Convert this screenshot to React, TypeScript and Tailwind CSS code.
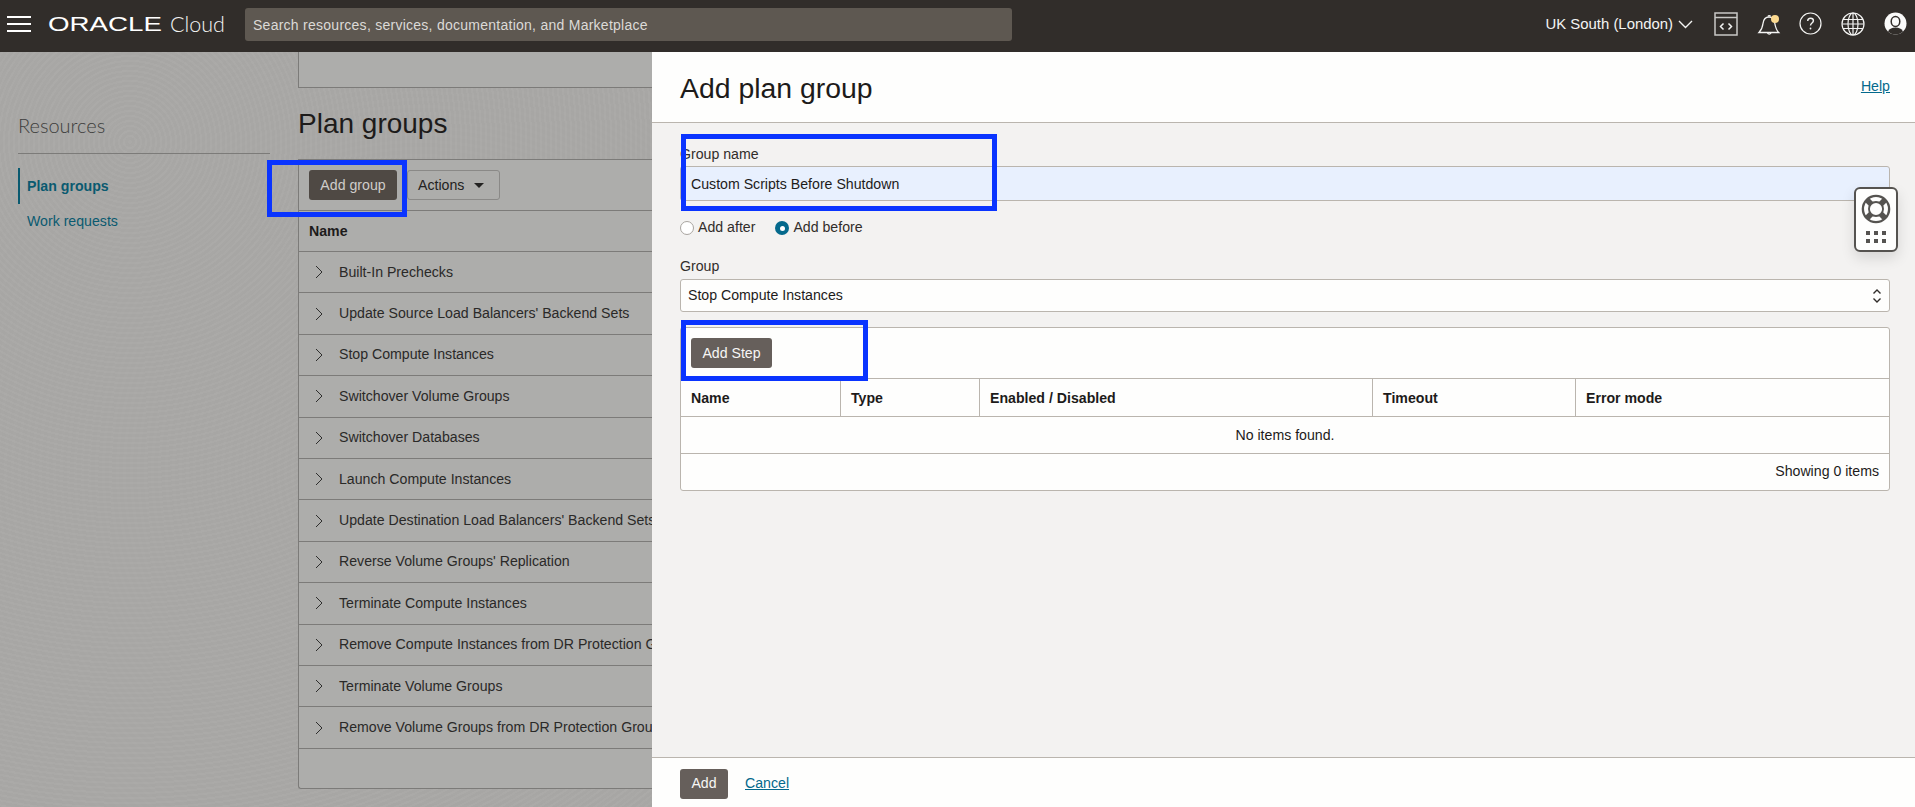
const SANS = "font-['Liberation_Sans',Arial,sans-serif]";

const PLAN_GROUPS = [
  "Built-In Prechecks",
  "Update Source Load Balancers' Backend Sets",
  "Stop Compute Instances",
  "Switchover Volume Groups",
  "Switchover Databases",
  "Launch Compute Instances",
  "Update Destination Load Balancers' Backend Sets",
  "Reverse Volume Groups' Replication",
  "Terminate Compute Instances",
  "Remove Compute Instances from DR Protection Group",
  "Terminate Volume Groups",
  "Remove Volume Groups from DR Protection Group",
];

const STEP_COLUMNS = [
  { label: "Name", width: "w-[160px]" },
  { label: "Type", width: "w-[139px]" },
  { label: "Enabled / Disabled", width: "w-[393px]" },
  { label: "Timeout", width: "w-[203px]" },
  { label: "Error mode", width: "flex-1" },
];

function TopBarIcons() {
  return (
    <div className="flex items-center gap-[19px]">
      <svg width="24" height="24" viewBox="0 0 24 24" fill="none" stroke="#c9c8c6" strokeWidth="1.5">
        <rect x="1" y="1" width="22" height="22" />
        <path d="M1 5.500h22" />
        <path d="M9.500 11.500 6.500 14.500l3 3M14.500 11.500l3 3-3 3" stroke="#f4f4f3" />
      </svg>
      <svg width="24" height="24" viewBox="0 0 24 24" fill="none" stroke="#f4f4f3" strokeWidth="1.3" className="mr-[-1px]">
        <path d="M2 20.500c2-2 3.500-5 4-9 .5-4 2.500-6.500 6-6.500 3 0 5 2 5.700 6 .7 4 2 7.500 4 9.500z" />
        <path d="M10.500 21a2 2 0 0 0 3.500 0" />
        <path d="M11 4.500a1.300 1.300 0 0 1 2.500 0" />
        <circle cx="18" cy="7" r="4" fill="#fcd98f" stroke="none" />
      </svg>
      <svg width="23" height="23" viewBox="0 0 23 23" fill="none" stroke="#f4f4f3" strokeWidth="1.2">
        <circle cx="11.500" cy="11.500" r="10.500" />
        <path d="M8.700 9c0-1.700 1.200-2.800 2.900-2.800s2.800 1 2.800 2.500c0 2.300-2.900 2.300-2.900 4.800" strokeWidth="1.400" />
        <circle cx="11.500" cy="16.500" r="0.900" fill="#f4f4f3" stroke="none" />
      </svg>
      <svg width="24" height="24" viewBox="0 0 24 24" fill="none" stroke="#f4f4f3" strokeWidth="1.2">
        <circle cx="12" cy="12" r="11" />
        <ellipse cx="12" cy="12" rx="5" ry="11" />
        <path d="M12 1v22M2 7.500h20M1 12h22M2 16.500h20" />
      </svg>
      <svg width="23" height="23" viewBox="0 0 23 23">
        <circle cx="11.500" cy="11.500" r="11" fill="#fbfbfa" />
        <ellipse cx="11.500" cy="9.500" rx="4.300" ry="5" fill="none" stroke="#312d2a" strokeWidth="1.500" />
        <path d="M4 19.500c1.500-3 4-4 7.500-4s6 1 7.500 4c-2 2-4.500 3-7.500 3s-5.500-1-7.500-3z" fill="#312d2a" />
      </svg>
    </div>
  );
}

function TopBar() {
  return (
    <header className="flex h-[52px] shrink-0 items-center bg-[#312d2a] pb-[3px]">
      <div className="mb-[1px] ml-[7px] flex w-[24px] flex-col gap-[5px]">
        <span className="h-[2px] bg-white" />
        <span className="h-[2px] bg-white" />
        <span className="h-[2px] bg-white" />
      </div>
      <div className="ml-[17px] w-[122px] overflow-visible">
        <span className={`${SANS} inline-block origin-left scale-x-[1.32] text-[21px] leading-none text-white`}>
          ORACLE
        </span>
      </div>
      <span className="w-[75px] font-['Lato',sans-serif] text-[21.500px] font-light leading-none text-[#f4f4f3]">Cloud</span>
      <input
        readOnly
        placeholder="Search resources, services, documentation, and Marketplace"
        className={`${SANS} h-[33px] w-[767px] rounded-[3px] bg-[#5e5851] px-[8px] text-[14px] tracking-[0.26px] outline-none placeholder:text-[#dcdad7]`}
      />
      <div className={`${SANS} ml-auto flex items-center text-[14.900px] text-[#f4f4f3]`}>
        UK South (London)
        <svg width="15" height="9" viewBox="0 0 15 9" fill="none" stroke="#f4f4f3" strokeWidth="1.400" className="ml-[5px]">
          <path d="M1 1l6.500 6.500L14 1" />
        </svg>
      </div>
      <div className="mb-[2px] ml-[21px] mr-[8px]">
        <TopBarIcons />
      </div>
    </header>
  );
}

function RowChevron() {
  return (
    <svg width="8" height="14" viewBox="0 0 8 14" fill="none" stroke="#2e2e2d" strokeWidth="1">
      <path d="M1 1l6 6-6 6" />
    </svg>
  );
}

function BackgroundPage() {
  return (
    <div className="flex w-[652px] shrink-0 overflow-hidden bg-[#a9a8a6] bg-[repeating-radial-gradient(circle_at_130px_90px,rgba(255,255,255,0.012)_0,rgba(255,255,255,0.012)_2px,rgba(0,0,0,0.012)_2px,rgba(0,0,0,0.012)_5px),repeating-radial-gradient(circle_at_420px_420px,rgba(255,255,255,0.01)_0,rgba(255,255,255,0.01)_3px,transparent_3px,transparent_7px)]">
      <aside className="w-[298px] shrink-0 pl-[18px] pr-[28px] pt-[60px]">
        <div className="border-b border-[#7c7b79] pb-[15px] font-['Lato',sans-serif] text-[20px] font-light leading-[26px] text-[#3d3d3c]">
          Resources
        </div>
        <nav className={`${SANS} mt-[14px] text-[14.150px] text-[#0a5a70]`}>
          <div className="flex h-[36px] items-center border-l-[2px] border-[#0a5a70] pl-[7px] pt-[2px] font-bold">Plan groups</div>
          <div className="mt-[8px] flex h-[20px] items-center pl-[9px]">Work requests</div>
        </nav>
      </aside>
      <main className={`${SANS} w-[900px] shrink-0`}>
        <div className="h-[36px] border-b border-l border-[#7c7b79] bg-[#adadab]" />
        <h2 className="mt-[17px] h-[54px] text-[28px] font-normal leading-[38px] text-[#1d1b1a]">Plan groups</h2>
        <section className="h-[630px] rounded-bl-[3px] border-b border-l border-t border-[#7c7b79] bg-[#adadab] text-[14.150px]">
          <div className="flex h-[51px] items-center gap-[10px] border-b border-[#7c7b79] pl-[10px]">
            <button className="flex h-[30px] w-[88px] items-center justify-center rounded-[3px] bg-[#4f4944] pt-[1px] text-[#cfcdca]">
              Add group
            </button>
            <button className="flex h-[30px] w-[93px] items-center gap-[10px] rounded-[3px] border border-[#8a8987] pl-[10px] pt-[1px] text-[#232221]">
              Actions
              <span className="border-x-[5px] border-t-[5px] border-x-transparent border-t-[#232221]" />
            </button>
          </div>
          <div className="flex h-[41px] items-center border-b border-[#7c7b79] pl-[10px] pt-[2px] font-bold text-[#1d1b1a]">Name</div>
          {PLAN_GROUPS.map((name) => (
            <div
              key={name}
              className="flex h-[41.420px] items-center gap-[16px] whitespace-nowrap border-b border-[#7c7b79] pl-[16px] text-[#2a2928]"
            >
              <RowChevron />
              {name}
            </div>
          ))}
        </section>
      </main>
    </div>
  );
}

function RadioOption({ label, checked }: { label: string; checked?: boolean }) {
  return (
    <div className="flex items-center gap-[4px]">
      {checked ? (
        <span className="flex size-[14px] items-center justify-center rounded-full bg-[#04698c]">
          <span className="size-[5px] rounded-full bg-white" />
        </span>
      ) : (
        <span className="size-[14px] rounded-full border border-[#a9a5a0] bg-white" />
      )}
      {label}
    </div>
  );
}

function AddPlanGroupPanel() {
  return (
    <div className={`${SANS} flex min-w-0 flex-1 flex-col bg-[#f3f2f1] text-[14.150px] text-[#1d1b1a]`}>
      <div className="flex h-[71px] shrink-0 items-center justify-between border-b border-[#bab5ae] bg-[#fefefd] pl-[28px] pr-[25px]">
        <h1 className="mt-[3px] text-[28.400px] font-normal leading-none">Add plan group</h1>
        <a className="text-[#04698c] underline">Help</a>
      </div>
      <div className="flex-1 pl-[28px] pr-[25px] pt-[21px]">
        <label className="block leading-[20px] text-[#312d2a]">Group name</label>
        <input
          readOnly
          value="Custom Scripts Before Shutdown"
          className="mt-[2px] h-[35px] w-full rounded-[3px] border border-[#bab5ae] bg-[#e8f0fe] px-[10px] outline-none"
        />
        <div className="mt-[17px] flex h-[20px] items-center gap-[20px] text-[#312d2a]">
          <RadioOption label="Add after" />
          <RadioOption label="Add before" checked />
        </div>
        <label className="mt-[18px] block leading-[20px] text-[#312d2a]">Group</label>
        <div className="mt-[3px] flex h-[33px] items-center justify-between rounded-[3px] border border-[#bab5ae] bg-[#fefefd] pl-[7px] pr-[7px] pt-[1px]">
          Stop Compute Instances
          <svg width="10" height="16" viewBox="0 0 10 16" fill="none" stroke="#312d2a" strokeWidth="1.4">
            <path d="M1.500 5.500 5 2l3.500 3.500M1.500 10.500 5 14l3.500-3.500" />
          </svg>
        </div>
        <section className="mt-[15px] h-[164px] rounded-[3px] border border-[#bab5ae] bg-[#fefefd]">
          <div className="flex h-[51px] items-center border-b border-[#bab5ae] pl-[10px]">
            <button className="flex h-[30px] w-[81px] items-center justify-center rounded-[3px] bg-[#665f5b] pt-[1px] text-[#f7f6f5]">
              Add Step
            </button>
          </div>
          <div className="flex h-[38px] border-b border-[#bab5ae] font-bold">
            {STEP_COLUMNS.map((col) => (
              <div key={col.label} className={`${col.width} flex items-center border-r border-[#bab5ae] pl-[10px] pt-[2px] last:border-r-0`}>
                {col.label}
              </div>
            ))}
          </div>
          <div className="flex h-[37px] items-center justify-center border-b border-[#bab5ae] pt-[1px]">No items found.</div>
          <div className="flex h-[36px] items-center justify-end pr-[10px]">Showing 0 items</div>
        </section>
      </div>
      <div className="flex h-[50px] shrink-0 items-center gap-[17px] border-t border-[#bab5ae] bg-[#fefefd] pl-[28px] pt-[2px]">
        <button className="flex h-[30px] w-[48px] items-center justify-center rounded-[3px] bg-[#665f5b] pt-[1px] text-[#f7f6f5]">Add</button>
        <a className="pt-[1px] text-[#04698c] underline">Cancel</a>
      </div>
    </div>
  );
}

function HelpWidget() {
  return (
    <div className="absolute left-[1854px] top-[187px] flex h-[65px] w-[44px] flex-col items-center rounded-[6px] border-2 border-[#555350] bg-[#fefefd] pt-[5px] shadow-[0_6px_14px_rgba(0,0,0,0.12)]">
      <svg width="30" height="30" viewBox="0 0 32 32" fill="none">
        <circle cx="16" cy="16" r="14" stroke="#555350" strokeWidth="2.500" fill="#fefefd" />
        <path d="M6.500 6.500l5 5M25.500 6.500l-5 5M6.500 25.500l5-5M25.500 25.500l-5-5" stroke="#555350" strokeWidth="6" />
        <circle cx="16" cy="16" r="7.500" stroke="#555350" strokeWidth="2" fill="#fefefd" />
      </svg>
      <div className="mt-[7px] grid grid-cols-3 gap-[4px]">
        {[0, 1, 2, 3, 4, 5].map((i) => (
          <span key={i} className="size-[4px] bg-[#555350]" />
        ))}
      </div>
    </div>
  );
}

export default function App() {
  return (
    <div className="relative flex h-[807px] w-[1915px] flex-col overflow-hidden">
      <TopBar />
      <div className="flex min-h-0 flex-1">
        <BackgroundPage />
        <AddPlanGroupPanel />
      </div>
      <HelpWidget />
      {/* callouts drawn over the screenshot */}
      <div className="absolute left-[267px] top-[160px] h-[57px] w-[140px] border-[5px] border-[#0a34ff]" />
      <div className="absolute left-[681px] top-[134px] h-[77px] w-[316px] border-[5px] border-[#0a34ff]" />
      <div className="absolute left-[681px] top-[320px] h-[61px] w-[187px] border-[5px] border-[#0a34ff]" />
    </div>
  );
}
